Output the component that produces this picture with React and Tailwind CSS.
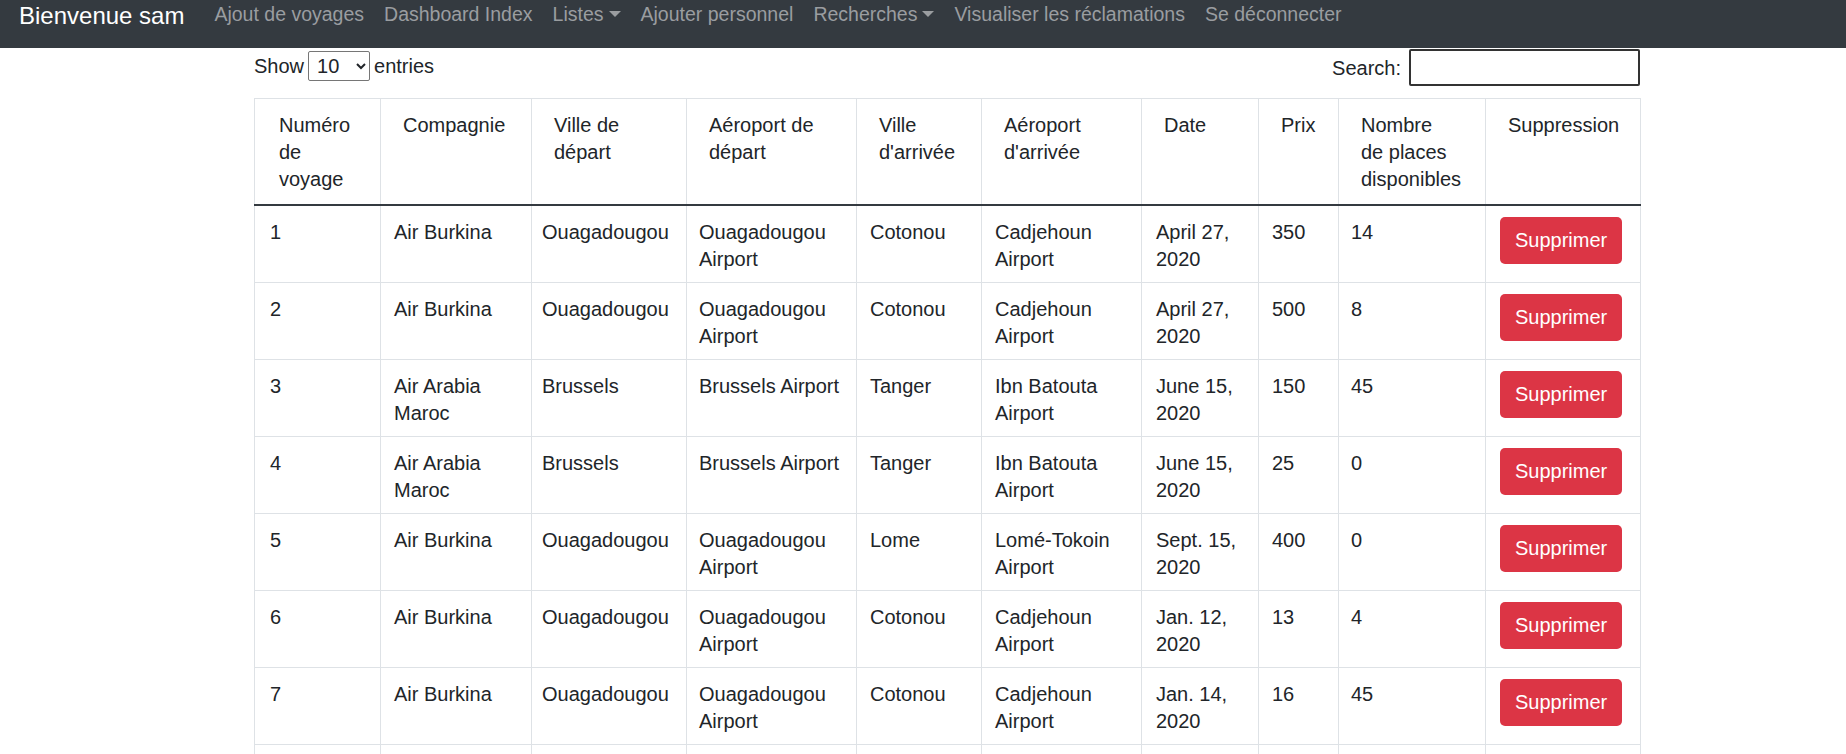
import React from 'react';

const voyages = [
  { id: 1, comp: ['Air Burkina'], dep: 'Ouagadougou', aero: ['Ouagadougou', 'Airport'], arr: 'Cotonou', aeroArr: ['Cadjehoun', 'Airport'], date: ['April 27,', '2020'], prix: 350, places: 14 },
  { id: 2, comp: ['Air Burkina'], dep: 'Ouagadougou', aero: ['Ouagadougou', 'Airport'], arr: 'Cotonou', aeroArr: ['Cadjehoun', 'Airport'], date: ['April 27,', '2020'], prix: 500, places: 8 },
  { id: 3, comp: ['Air Arabia', 'Maroc'], dep: 'Brussels', aero: ['Brussels Airport'], arr: 'Tanger', aeroArr: ['Ibn Batouta', 'Airport'], date: ['June 15,', '2020'], prix: 150, places: 45 },
  { id: 4, comp: ['Air Arabia', 'Maroc'], dep: 'Brussels', aero: ['Brussels Airport'], arr: 'Tanger', aeroArr: ['Ibn Batouta', 'Airport'], date: ['June 15,', '2020'], prix: 25, places: 0 },
  { id: 5, comp: ['Air Burkina'], dep: 'Ouagadougou', aero: ['Ouagadougou', 'Airport'], arr: 'Lome', aeroArr: ['Lomé-Tokoin', 'Airport'], date: ['Sept. 15,', '2020'], prix: 400, places: 0 },
  { id: 6, comp: ['Air Burkina'], dep: 'Ouagadougou', aero: ['Ouagadougou', 'Airport'], arr: 'Cotonou', aeroArr: ['Cadjehoun', 'Airport'], date: ['Jan. 12,', '2020'], prix: 13, places: 4 },
  { id: 7, comp: ['Air Burkina'], dep: 'Ouagadougou', aero: ['Ouagadougou', 'Airport'], arr: 'Cotonou', aeroArr: ['Cadjehoun', 'Airport'], date: ['Jan. 14,', '2020'], prix: 16, places: 45 },
];

const headers = [
  ['Numéro', 'de', 'voyage'],
  ['Compagnie'],
  ['Ville de', 'départ'],
  ['Aéroport de', 'départ'],
  ['Ville', "d'arrivée"],
  ['Aéroport', "d'arrivée"],
  ['Date'],
  ['Prix'],
  ['Nombre', 'de places', 'disponibles'],
  ['Suppression'],
];

const widths = [126, 151, 155, 170, 125, 160, 117, 80, 147, 155];

const Lines = ({ lines }) => lines.map((l, i) => (
  <React.Fragment key={i}>
    {i > 0 && <br />}
    {l}
  </React.Fragment>
));

const Caret = () => (
  <span className="inline-block ml-[5px] align-[4px] border-t-[6px] border-x-[6px] border-x-transparent border-t-[#9a9da0]" />
);

const NavLink = ({ children }) => (
  <a className="px-[10px] text-[19.5px] text-[#9a9da0] whitespace-nowrap">{children}</a>
);

const td = 'border border-[#dee2e6] align-top pt-[13px] pb-[9px]';

export default function App() {
  return (
    <div className="min-h-screen bg-white text-[#212529]" style={{ fontFamily: '"Liberation Sans", Arial, sans-serif' }}>
      {/* --- NAVBAR --- */}
      <nav className="h-[48px] bg-[#343a40] flex items-start pt-[1px] pl-[19px]">
        <span className="text-[24px] leading-[30px] text-white mr-[20px] whitespace-nowrap">Bienvenue sam</span>
        <div className="flex items-center h-[28px]">
          <NavLink>Ajout de voyages</NavLink>
          <NavLink>Dashboard Index</NavLink>
          <NavLink>Listes<Caret /></NavLink>
          <NavLink>Ajouter personnel</NavLink>
          <NavLink>Recherches<Caret /></NavLink>
          <NavLink>Visualiser les réclamations</NavLink>
          <NavLink>Se déconnecter</NavLink>
        </div>
      </nav>

      {/* --- TABLE --- */}
      <div className="ml-[254px] w-[1386px]">
        <div className="flex justify-between items-start h-[50px] pt-[1px] text-[20px]">
          <div className="flex items-center gap-[4px] mt-[2px]">
            <span>Show</span>
            <select className="w-[62px] h-[30px] border border-[#767676] rounded-[2px] text-[20px] pl-[4px]" defaultValue="10">
              <option>10</option>
              <option>25</option>
              <option>50</option>
            </select>
            <span>entries</span>
          </div>
          <div className="flex items-center gap-[8px]">
            <span>Search:</span>
            <input className="w-[231px] h-[37px] border-2 border-[#333] rounded-[2px] outline-none" />
          </div>
        </div>

        <table className="table-fixed border-collapse w-[1386px] text-[20px] leading-[27px]">
          <colgroup>
            {widths.map((w, i) => <col key={i} style={{ width: w }} />)}
          </colgroup>
          <thead>
            <tr>
              {headers.map((h, i) => (
                <th key={i} className={`border border-[#dee2e6] border-b-2 border-b-[#343a40] font-normal text-left align-top pr-[6px] pt-[13px] pb-[11px] ${i === 0 ? 'pl-[24px]' : 'pl-[22px]'}`}>
                  <Lines lines={h} />
                </th>
              ))}
            </tr>
          </thead>
          <tbody>
            {voyages.map(v => (
              <tr key={v.id}>
                <td className={`${td} px-[15px]`}>{v.id}</td>
                <td className={`${td} px-[13px]`}><Lines lines={v.comp} /></td>
                <td className={`${td} px-[10px]`}>{v.dep}</td>
                <td className={`${td} px-[12px]`}><Lines lines={v.aero} /></td>
                <td className={`${td} px-[13px]`}>{v.arr}</td>
                <td className={`${td} px-[13px]`}><Lines lines={v.aeroArr} /></td>
                <td className={`${td} px-[14px]`}><Lines lines={v.date} /></td>
                <td className={`${td} px-[13px]`}>{v.prix}</td>
                <td className={`${td} px-[12px]`}>{v.places}</td>
                <td className="border border-[#dee2e6] align-top px-[14px] pt-[11px] pb-[9px]">
                  <button className="h-[47px] px-[15px] bg-[#dc3545] text-white rounded-[5px] text-[20px]">Supprimer</button>
                </td>
              </tr>
            ))}
            <tr>
              {widths.map((w, i) => (
                <td key={i} className="border border-[#dee2e6] h-[77px]" />
              ))}
            </tr>
          </tbody>
        </table>
      </div>
    </div>
  );
}
